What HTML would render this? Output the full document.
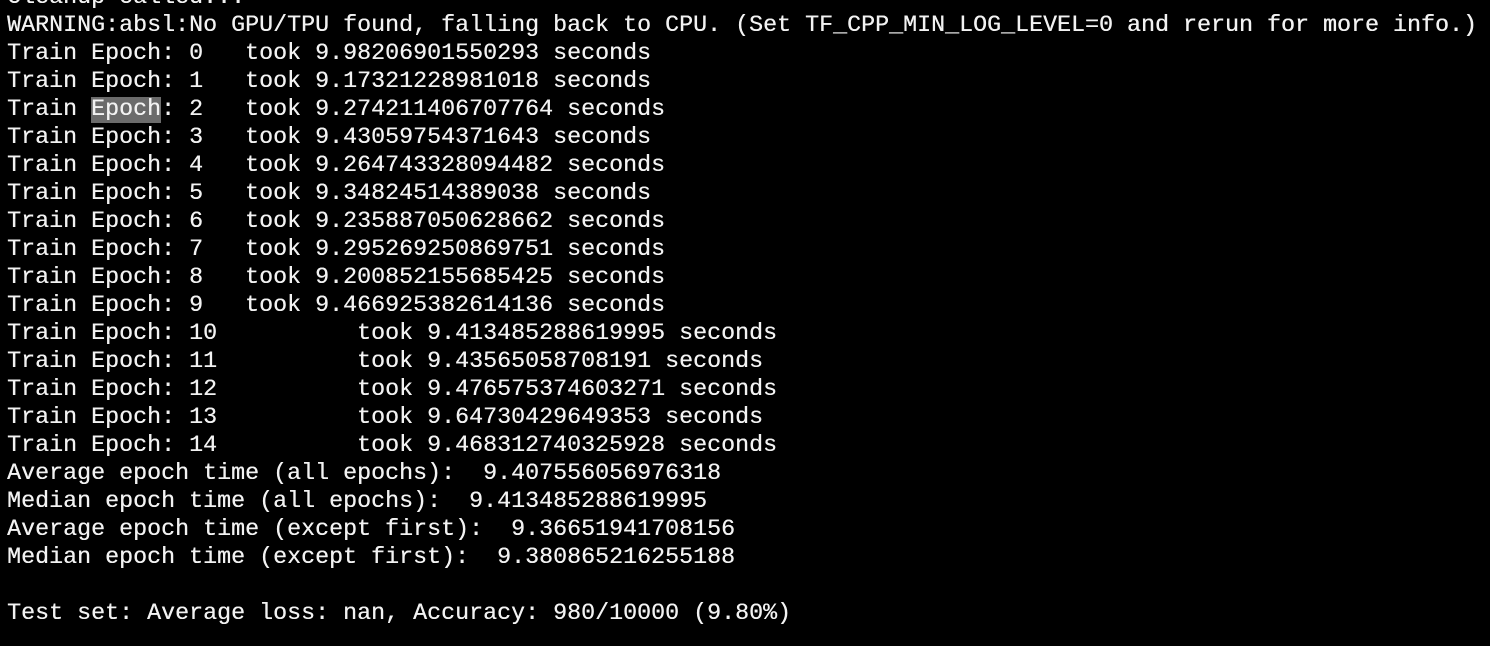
<!DOCTYPE html>
<html><head><meta charset="utf-8"><style>
html,body{margin:0;padding:0;background:#000;width:1490px;height:646px;overflow:hidden}
pre{position:absolute;left:7px;top:-16px;margin:0;font-family:"Liberation Mono","DejaVu Sans Mono",monospace;font-size:23.33px;line-height:28px;color:#f2f2f2;white-space:pre;text-shadow:0.3px 0 0 #f2f2f2}
.h{background:#6b6b6b}
</style></head><body><pre>Cleanup called...
WARNING:absl:No GPU/TPU found, falling back to CPU. (Set TF_CPP_MIN_LOG_LEVEL=0 and rerun for more info.)
Train Epoch: 0   took 9.98206901550293 seconds
Train Epoch: 1   took 9.17321228981018 seconds
Train <span class="h">Epoch</span>: 2   took 9.274211406707764 seconds
Train Epoch: 3   took 9.43059754371643 seconds
Train Epoch: 4   took 9.264743328094482 seconds
Train Epoch: 5   took 9.34824514389038 seconds
Train Epoch: 6   took 9.235887050628662 seconds
Train Epoch: 7   took 9.295269250869751 seconds
Train Epoch: 8   took 9.200852155685425 seconds
Train Epoch: 9   took 9.466925382614136 seconds
Train Epoch: 10          took 9.413485288619995 seconds
Train Epoch: 11          took 9.43565058708191 seconds
Train Epoch: 12          took 9.476575374603271 seconds
Train Epoch: 13          took 9.64730429649353 seconds
Train Epoch: 14          took 9.468312740325928 seconds
Average epoch time (all epochs):  9.407556056976318
Median epoch time (all epochs):  9.413485288619995
Average epoch time (except first):  9.36651941708156
Median epoch time (except first):  9.380865216255188

Test set: Average loss: nan, Accuracy: 980/10000 (9.80%)
</pre></body></html>
